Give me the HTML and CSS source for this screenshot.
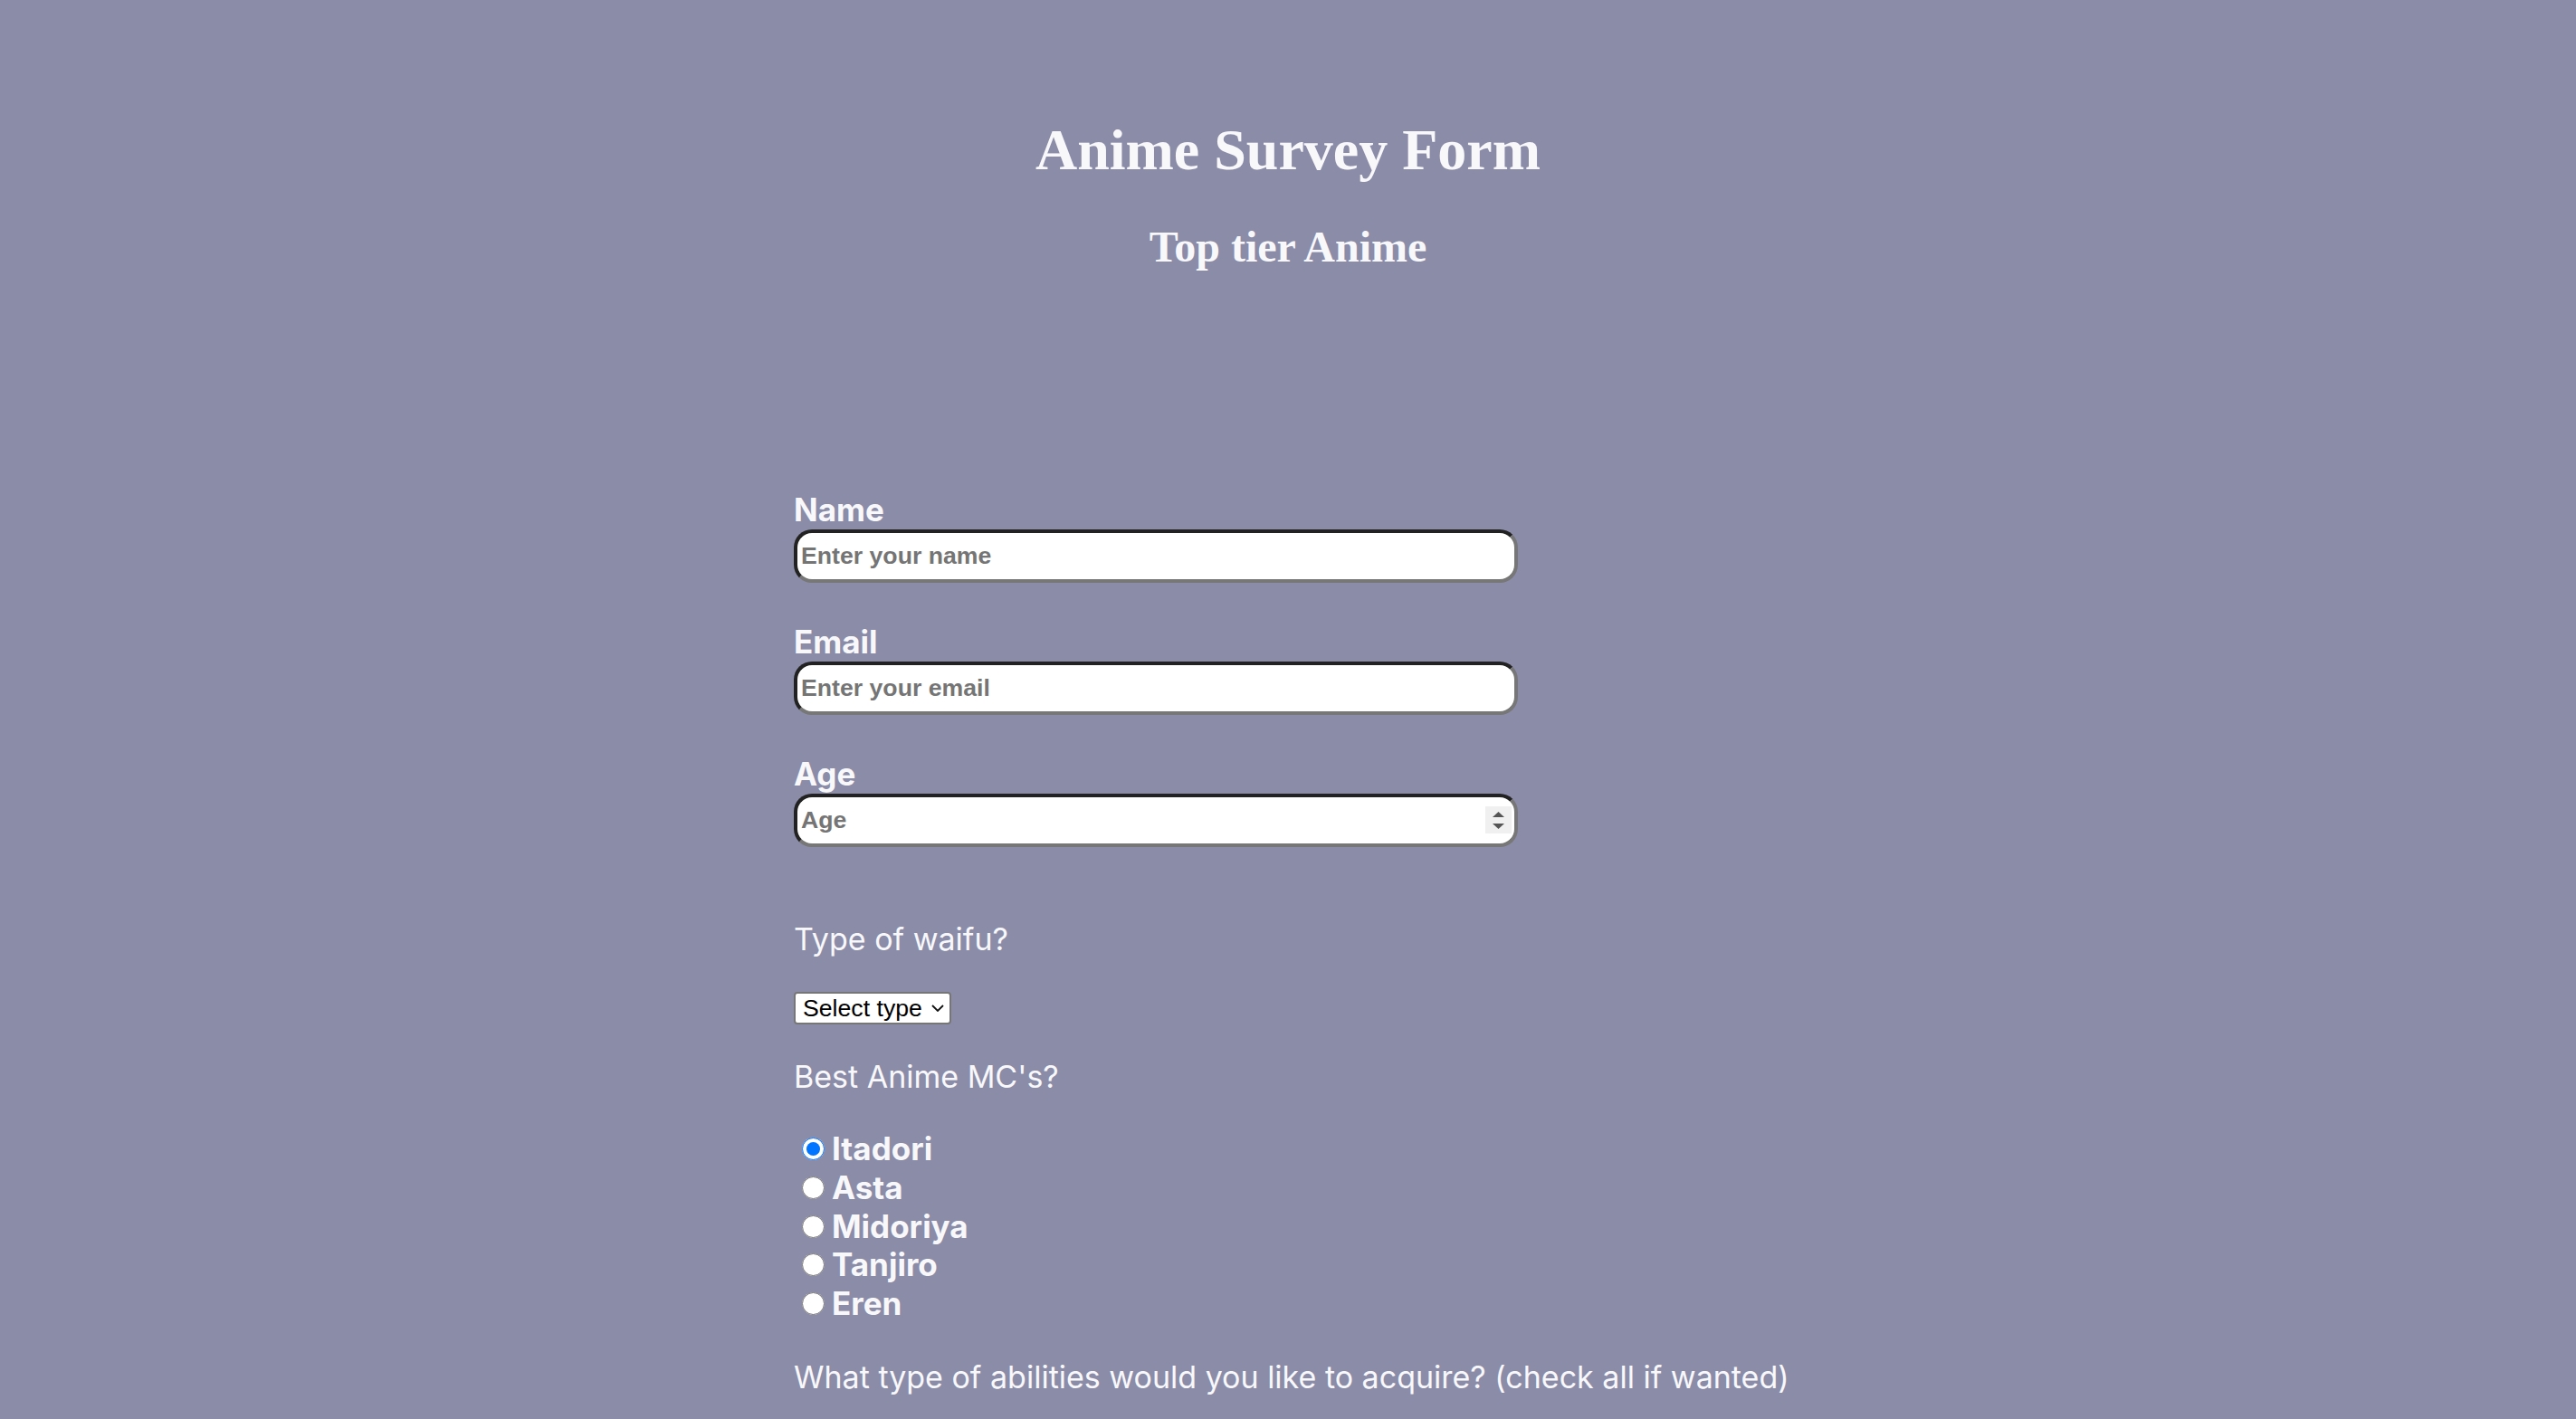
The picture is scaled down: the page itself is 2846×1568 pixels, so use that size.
FILE: index.html
```html
<!DOCTYPE html>
<html lang="en">
<head>
<meta charset="utf-8">
<title>Anime Survey Form</title>
<link rel="stylesheet" href="styles.css">
</head>
<body>
<header class="hero">
  <h1 class="title" id="title">Anime Survey Form</h1>
  <h2 class="subtitle" id="description">Top tier Anime</h2>
</header>
<form class="survey" id="survey-form">
  <div class="fields">
    <div class="field">
      <label class="field-label" for="name">Name</label>
      <input class="text-input" id="name" type="text" placeholder="Enter your name">
    </div>
    <div class="field">
      <label class="field-label" for="email">Email</label>
      <input class="text-input" id="email" type="email" placeholder="Enter your email">
    </div>
    <div class="field">
      <label class="field-label" for="number">Age</label>
      <div class="number-wrap">
        <input class="text-input number-input" id="number" type="number" placeholder="Age">
        <span class="spinner" aria-hidden="true">
          <svg width="29" height="30" viewBox="0 0 29 30"><polygon points="8,12 14.5,6 21,12" fill="#555"/><polygon points="8,19 21,19 14.5,25" fill="#555"/></svg>
        </span>
      </div>
    </div>
  </div>

  <p class="question">Type of waifu?</p>
  <div class="select-wrap">
    <select class="select" id="dropdown">
      <option>Select type</option>
      <option>Tsundere</option>
      <option>Yandere</option>
      <option>Kuudere</option>
      <option>Dandere</option>
    </select>
    <svg class="chevron" width="14" height="8" viewBox="0 0 14 8" aria-hidden="true"><polyline points="1,1 7,7 13,1" fill="none" stroke="#111" stroke-width="1.8"/></svg>
  </div>

  <p class="question">Best Anime MC's?</p>
  <div class="radio-list">
    <label class="radio-row"><input class="radio" type="radio" name="mc" value="itadori" checked>Itadori</label>
    <label class="radio-row"><input class="radio" type="radio" name="mc" value="asta">Asta</label>
    <label class="radio-row"><input class="radio" type="radio" name="mc" value="midoriya">Midoriya</label>
    <label class="radio-row"><input class="radio" type="radio" name="mc" value="tanjiro">Tanjiro</label>
    <label class="radio-row"><input class="radio" type="radio" name="mc" value="eren">Eren</label>
  </div>

  <p class="question question-long">What type of abilities would you like to acquire? (check all if wanted)</p>
</form>
</body>
</html>
```

FILE: styles.css
```css
html, body {
  margin: 0;
  padding: 0;
}

body {
  background: #8b8ca8;
  color: #f8f8fb;
  font-family: Inter, "Noto Sans", "Liberation Sans", sans-serif;
}

.hero {
  padding-top: 129px;
  text-align: center;
  font-family: "Liberation Serif", "Times New Roman", serif;
}

.title {
  margin: 0;
  font-size: 64px;
  line-height: 74px;
  font-weight: 700;
}

.subtitle {
  margin: 42px 0 0;
  font-size: 48px;
  line-height: 56px;
  font-weight: 700;
}

.survey {
  width: 1092px;
  margin: 0 auto;
  padding-top: 240px;
}

.fields {
  display: flex;
  flex-direction: column;
  gap: 43px;
  margin-bottom: 80px;
}

.field {
  display: flex;
  flex-direction: column;
  align-items: flex-start;
}

.field-label {
  font-size: 35px;
  line-height: 44px;
  font-weight: 700;
}

.text-input {
  box-sizing: border-box;
  width: 800px;
  height: 59px;
  margin: 0;
  padding: 2px 4px;
  border: 4px solid;
  border-color: #222 #777 #777 #222;
  border-radius: 20px;
  background: #fff;
  font-family: "Liberation Sans", Arial, sans-serif;
  font-size: 26.67px;
  font-weight: 700;
  color: #222;
  outline: none;
}

.text-input::placeholder {
  color: #757575;
  opacity: 1;
}

.number-input {
  -moz-appearance: textfield;
}

.number-input::-webkit-inner-spin-button,
.number-input::-webkit-outer-spin-button {
  -webkit-appearance: none;
  margin: 0;
}

.number-wrap {
  position: relative;
  width: 800px;
  height: 59px;
}

.spinner {
  position: absolute;
  right: 7px;
  top: 14px;
  width: 29px;
  height: 30px;
  background: #f0f0f0;
  pointer-events: none;
}

.spinner svg {
  display: block;
}

.question {
  margin: 36px 0;
  font-size: 34px;
  line-height: 44px;
  font-weight: 400;
}

.question-long {
  white-space: nowrap;
}

.select-wrap {
  position: relative;
  width: 174px;
  height: 36px;
}

.select {
  -webkit-appearance: none;
  appearance: none;
  box-sizing: border-box;
  width: 174px;
  height: 36px;
  margin: 0;
  padding: 0 0 0 8px;
  border: 2px solid #767676;
  border-radius: 4px;
  background: #fff;
  color: #000;
  font-family: "Liberation Sans", Arial, sans-serif;
  font-size: 26.67px;
  line-height: 32px;
}

.chevron {
  position: absolute;
  left: 152px;
  top: 14px;
  pointer-events: none;
}

.radio-list {
  margin: 36px 0 38px;
}

.radio-row {
  display: block;
  font-size: 35px;
  line-height: 42.8px;
  font-weight: 700;
}

.radio {
  width: 25px;
  height: 25px;
  margin: 0 8px 0 9px;
  vertical-align: baseline;
}
```
